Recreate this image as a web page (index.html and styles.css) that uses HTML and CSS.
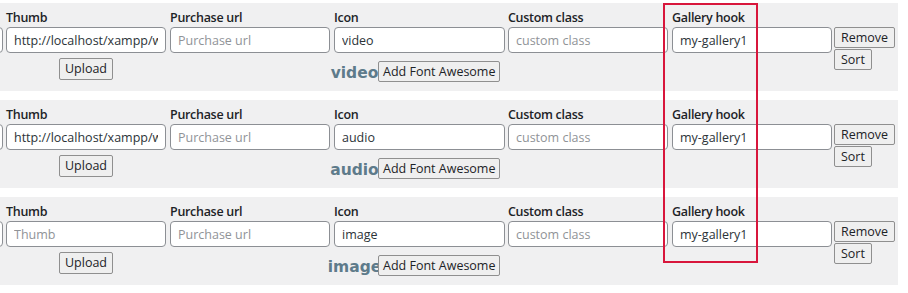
FILE: index.html
```html
<!DOCTYPE html>
<html lang="en">
<head>
<meta charset="utf-8">
<title>Gallery items</title>
<link rel="stylesheet" href="styles.css">
</head>
<body>
<div class="list">
  <div class="row">
    <div class="cell cut"><input class="field" type="text" value=""></div>
    <div class="cell">
      <label class="lbl">Thumb</label>
      <input class="field" type="text" value="http://localhost/xampp/wordpress/wp-content/uploads/video.jpg">
      <div class="sub"><button class="btn">Upload</button></div>
    </div>
    <div class="cell">
      <label class="lbl">Purchase url</label>
      <input class="field" type="text" placeholder="Purchase url">
    </div>
    <div class="cell">
      <label class="lbl">Icon</label>
      <input class="field wide" type="text" value="video">
      <div class="icon-line"><span class="glyph"><span>video</span></span><button class="btn">Add Font Awesome</button></div>
    </div>
    <div class="cell">
      <label class="lbl">Custom class</label>
      <input class="field" type="text" placeholder="custom class">
    </div>
    <div class="cell">
      <label class="lbl">Gallery hook</label>
      <input class="field" type="text" value="my-gallery1">
    </div>
    <div class="actions"><button class="btn">Remove</button><button class="btn">Sort</button></div>
  </div>

  <div class="row">
    <div class="cell cut"><input class="field" type="text" value=""></div>
    <div class="cell">
      <label class="lbl">Thumb</label>
      <input class="field" type="text" value="http://localhost/xampp/wordpress/wp-content/uploads/audio.jpg">
      <div class="sub"><button class="btn">Upload</button></div>
    </div>
    <div class="cell">
      <label class="lbl">Purchase url</label>
      <input class="field" type="text" placeholder="Purchase url">
    </div>
    <div class="cell">
      <label class="lbl">Icon</label>
      <input class="field wide" type="text" value="audio">
      <div class="icon-line"><span class="glyph"><span>audio</span></span><button class="btn">Add Font Awesome</button></div>
    </div>
    <div class="cell">
      <label class="lbl">Custom class</label>
      <input class="field" type="text" placeholder="custom class">
    </div>
    <div class="cell">
      <label class="lbl">Gallery hook</label>
      <input class="field" type="text" value="my-gallery1">
    </div>
    <div class="actions"><button class="btn">Remove</button><button class="btn">Sort</button></div>
  </div>

  <div class="row">
    <div class="cell cut"><input class="field" type="text" value=""></div>
    <div class="cell">
      <label class="lbl">Thumb</label>
      <input class="field" type="text" placeholder="Thumb">
      <div class="sub"><button class="btn">Upload</button></div>
    </div>
    <div class="cell">
      <label class="lbl">Purchase url</label>
      <input class="field" type="text" placeholder="Purchase url">
    </div>
    <div class="cell">
      <label class="lbl">Icon</label>
      <input class="field wide" type="text" value="image">
      <div class="icon-line"><span class="glyph"><span>image</span></span><button class="btn">Add Font Awesome</button></div>
    </div>
    <div class="cell">
      <label class="lbl">Custom class</label>
      <input class="field" type="text" placeholder="custom class">
    </div>
    <div class="cell">
      <label class="lbl">Gallery hook</label>
      <input class="field" type="text" value="my-gallery1">
    </div>
    <div class="actions"><button class="btn">Remove</button><button class="btn">Sort</button></div>
  </div>

  <div class="highlight"></div>
</div>
</body>
</html>
```

FILE: styles.css
```css
* { box-sizing: border-box; }

html, body {
  background: #ffffff;
}

body {
  margin: 3px 0 0 0;
  font-family: "Open Sans", "Noto Sans", "Liberation Sans", sans-serif;
  font-size: 12.5px;
  color: #1d2327;
}

.list {
  position: relative;
  width: 898px;
}

.row {
  display: grid;
  grid-template-columns: 6px 164px 164px 174px 164px 162px auto;
  height: 88px;
  margin-bottom: 9px;
  padding-top: 5px;
  background: #f0f0f1;
  overflow: hidden;
}

.cell {
  display: flex;
  flex-direction: column;
  align-items: flex-start;
}

.cut {
  overflow: hidden;
  padding-top: 19px;
}

.cut .field {
  margin-left: -157px;
  flex: none;
}

.lbl {
  display: block;
  height: 19px;
  line-height: 19px;
  font-weight: 600;
  font-size: 12.5px;
  letter-spacing: -0.3px;
  color: #1d2327;
}

.field {
  width: 160px;
  height: 26px;
  padding: 0 7px;
  border: 1px solid #8c8f94;
  border-radius: 4px;
  background: #ffffff;
  font-family: inherit;
  font-size: 12.5px;
  color: #2c3338;
  outline: none;
}

.field.wide {
  width: 171px;
}

.field::placeholder {
  color: #909397;
}

.btn {
  flex: none;
  white-space: nowrap;
  font-family: inherit;
  font-size: 12.5px;
  color: #1d2327;
  height: 22px;
  padding: 0 5px;
  line-height: 20px;
  background: #efefef;
  border: 1px solid #8f8f8f;
  border-radius: 2px;
  cursor: pointer;
}

.sub {
  width: 160px;
  display: flex;
  justify-content: center;
  margin-top: 5px;
}

.icon-line {
  display: flex;
  align-items: flex-end;
  height: 24px;
  margin-top: 5px;
  margin-left: -3px;
}

.icon-line .btn {
  height: 21px;
  line-height: 19px;
  padding: 0 4px;
  position: relative;
}

.glyph {
  flex: none;
  display: flex;
  justify-content: center;
  width: 47px;
  height: 18px;
  white-space: nowrap;
}

.glyph span {
  flex: none;
  font-family: "DejaVu Sans", Verdana, sans-serif;
  font-weight: bold;
  font-size: 15.5px;
  line-height: 18px;
  color: #5e7b8b;
}

.actions {
  display: flex;
  flex-direction: column;
  align-items: flex-start;
  gap: 1px;
  padding-top: 19px;
}

.actions .btn {
  height: 21px;
  line-height: 19px;
  padding: 0 6px;
}

.highlight {
  position: absolute;
  left: 663px;
  top: 0;
  width: 95px;
  height: 260px;
  border: 2px solid #d8163c;
  pointer-events: none;
}
```
